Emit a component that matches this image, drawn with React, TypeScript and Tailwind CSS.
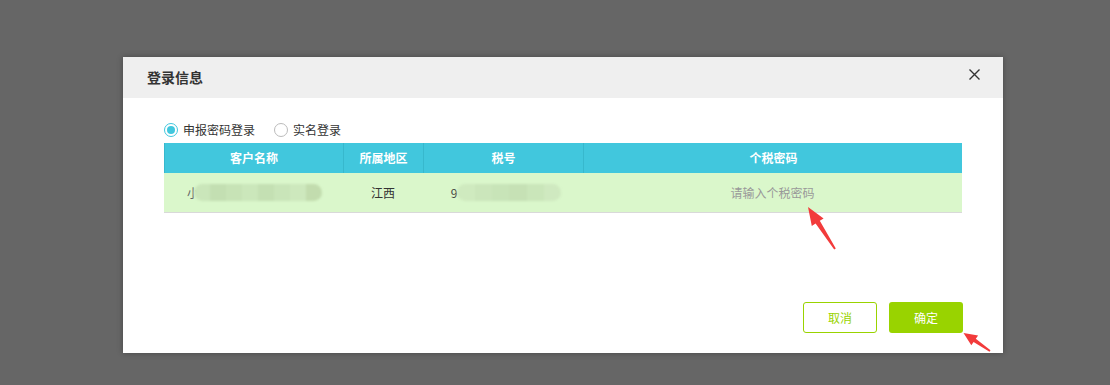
import React from 'react';

const font = "font-['Noto_Sans_CJK_SC','Microsoft_YaHei',sans-serif]";

function Radio({ checked, label }: { checked?: boolean; label: string }) {
  return (
    <label className="flex items-center gap-[5px] text-[12px] text-[#333]">
      <span
        className={`flex h-[14px] w-[14px] items-center justify-center rounded-full border bg-white ${
          checked ? 'border-[#41c7dd]' : 'border-[#bbb]'
        }`}
      >
        {checked && <span className="h-[8px] w-[8px] rounded-full bg-[#41c7dd]" />}
      </span>
      {label}
    </label>
  );
}

// pixelated blur used to hide sensitive values
function Masked({ width, tones, className = '' }: { width: number; tones: string[]; className?: string }) {
  return (
    <span className={`relative inline-flex h-[17px] overflow-hidden rounded-full blur-[1.2px] ${className}`} style={{ width }}>
      {tones.map((c, i) => (
        <span key={i} className="h-full flex-1" style={{ backgroundColor: c }} />
      ))}
    </span>
  );
}

export default function App() {
  return (
    <div className={`relative h-[385px] w-[1110px] overflow-hidden bg-[#666] pl-[123px] pt-[57px] ${font}`}>
      <div className="flex h-[296px] w-[880px] flex-col bg-white shadow-[0_0_6px_rgba(0,0,0,0.3)]">
        <div className="flex h-[41px] items-center justify-between bg-[#efefef] pl-[24px] pr-[23px]">
          <span className="text-[14px] font-semibold text-[#333]">登录信息</span>
          <svg width="11" height="11" viewBox="0 0 11 11" className="mt-[-7px]">
            <path d="M0.5 0.5L10.5 10.5M10.5 0.5L0.5 10.5" stroke="#333" strokeWidth="1.4" />
          </svg>
        </div>

        <div className="flex flex-1 flex-col px-[41px] pt-[24px]">
          <div className="flex h-[16px] items-center gap-[19px] pl-[-1px]">
            <Radio checked label="申报密码登录" />
            <Radio label="实名登录" />
          </div>

          <div className="mt-[5px] w-[798px]">
            <div className="grid h-[30px] grid-cols-[179px_80px_160px_379px] border-l border-[#37b8cd] bg-[#41c7dd] text-[12px] font-bold text-white">
              <div className="flex items-center justify-center border-r border-[#37b8cd]">客户名称</div>
              <div className="flex items-center justify-center border-r border-[#37b8cd]">所属地区</div>
              <div className="flex items-center justify-center border-r border-[#37b8cd]">税号</div>
              <div className="flex items-center justify-center">个税密码</div>
            </div>
            <div className="grid h-[40px] grid-cols-[179px_80px_160px_379px] border-b border-[#d9d9d9] bg-[#daf7cb] text-[12px] text-[#333]">
              <div className="flex items-center justify-center pl-[2px]">
                <span className="text-[#666]">小</span>
                <Masked
                  width={128}
                  className="ml-[-5px]"
                  tones={['#cae6ba', '#c3dfb2', '#c7e3b6', '#cbe7bb', '#c4e0b3', '#c9e5b9', '#cde8bd', '#c2dcae']}
                />
              </div>
              <div className="flex items-center justify-center">江西</div>
              <div className="flex items-center justify-center pl-[6px]">
                <span className="text-[#444]">9</span>
                <Masked width={104} tones={['#cfeabf', '#cbe6bb', '#c8e4b8', '#c6e1b5', '#cae6ba', '#cfe9c0']} />
              </div>
              <div className="flex items-center justify-center text-[#999]">请输入个税密码</div>
            </div>
          </div>

          <div className="mt-auto mb-[20px] flex justify-end gap-[12px]">
            <button className="h-[31px] w-[74px] rounded-[3px] border border-[#99d300] bg-white text-[12px] text-[#99d300]">
              取消
            </button>
            <button className="mr-[-1px] h-[31px] w-[74px] rounded-[3px] bg-[#99d300] text-[12px] text-white">
              确定
            </button>
          </div>
        </div>
      </div>

      <svg className="pointer-events-none absolute inset-0" width="1110" height="385">
        <polygon
          fill="#f23b3b"
          points="808,207 823.6,218.4 819.8,220.8 835.8,248.5 834.2,249.5 815.6,223.6 811.8,226"
        />
        <polygon
          fill="#f23b3b"
          points="963.5,333 978.1,335.5 975.8,338.8 990.5,350.3 989.5,351.7 973.6,342 971.3,345.3"
        />
      </svg>
    </div>
  );
}
